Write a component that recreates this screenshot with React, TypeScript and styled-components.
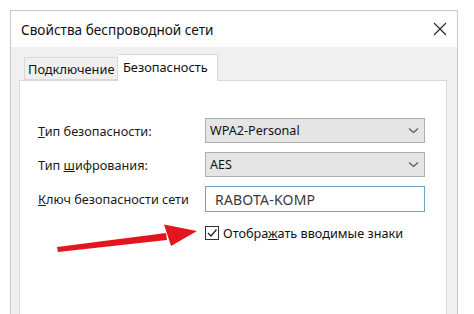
import React from "react";
import styled, { createGlobalStyle } from "styled-components";

const Global = createGlobalStyle`
  html, body { margin: 0; padding: 0; background: #ffffff; }
  body { width: 474px; height: 314px; overflow: hidden; position: relative; font-family: "Noto Sans", "Open Sans", sans-serif; }
`;

const Stage = styled.div`
  position: relative;
  width: 474px;
  height: 314px;
  overflow: hidden;
  background: #ffffff;
  padding: 10px 0 0 10px;
  box-sizing: border-box;
`;

const Window = styled.div`
  width: 448px;
  height: 330px;
  border: 1px solid #dcc4b4;
  box-sizing: border-box;
  display: flex;
  flex-direction: column;
  background: #f0f0f0;
`;

const TitleBar = styled.div`
  height: 36px;
  flex: none;
  background: #ffffff;
  display: flex;
  align-items: center;
  justify-content: space-between;
  padding: 0 10px 0 10px;
  font-size: 13.6px;
  color: #111;
`;

const Body = styled.div`
  flex: 1;
  display: flex;
  flex-direction: column;
  padding: 7px 10px 0 8px;
`;

const TabRow = styled.div`
  display: flex;
  align-items: flex-end;
  padding-left: 5px;
  height: 26px;
  flex: none;
  position: relative;
  z-index: 1;
`;

const Tab = styled.div<{ $active?: boolean }>`
  box-sizing: border-box;
  height: ${(p) => (p.$active ? "27px" : "23px")};
  width: ${(p) => (p.$active ? "100px" : "94px")};
  border: 1px solid #d9d9d9;
  border-bottom: ${(p) => (p.$active ? "none" : "1px solid #d9d9d9")};
  border-left: ${(p) => (p.$active ? "none" : "1px solid #d9d9d9")};
  background: ${(p) => (p.$active ? "#ffffff" : "#f0f0f0")};
  margin-bottom: ${(p) => (p.$active ? "-1px" : "0")};
  font-size: 12.8px;
  color: #111;
  white-space: nowrap;
  display: flex;
  align-items: ${(p) => (p.$active ? "flex-start" : "center")};
  padding-top: ${(p) => (p.$active ? "3px" : "0")};
  padding-left: ${(p) => (p.$active ? "5px" : "3px")};
`;

const Panel = styled.div`
  flex: 1;
  background: #ffffff;
  border: 1px solid #d9d9d9;
  padding: 37px 20px 0 18px;
  display: flex;
  flex-direction: column;
`;

const Form = styled.div`
  display: grid;
  grid-template-columns: 167px 220px;
  row-gap: 9px;
  align-items: center;
`;

const Label = styled.div`
  font-size: 12.7px;
  color: #1a1a1a;
  white-space: nowrap;
`;

const Select = styled.div`
  height: 25px;
  box-sizing: border-box;
  border: 1px solid #adadad;
  background: #e5e5e5;
  display: flex;
  align-items: center;
  justify-content: space-between;
  padding: 0 5px 0 4px;
  font-size: 12.6px;
  color: #111;
`;

const TextBox = styled.div`
  height: 26px;
  box-sizing: border-box;
  border: 1px solid #6ea3c1;
  background: #ffffff;
  display: flex;
  align-items: center;
  padding: 0 9px;
  font-size: 14px;
  letter-spacing: 0.2px;
  color: #3a3a3a;
`;

const CheckRow = styled.label`
  display: flex;
  align-items: center;
  gap: 4px;
  margin: 12px 0 0 167px;
  font-size: 12.7px;
  color: #111;
`;

const Box = styled.span`
  width: 14px;
  height: 14px;
  box-sizing: border-box;
  border: 1px solid #333;
  background: #fff;
  display: flex;
  align-items: center;
  justify-content: center;
`;

const Arrow = styled.svg`
  position: absolute;
  left: 0;
  top: 0;
  pointer-events: none;
`;

const Chevron = () => (
  <svg width="11" height="7" viewBox="0 0 11 7">
    <path d="M1 1.5 L5.5 5.5 L10 1.5" fill="none" stroke="#5a5a5a" strokeWidth="1.2" />
  </svg>
);

export default function App() {
  return (
    <>
      <Global />
      <Stage>
        <Window>
          <TitleBar>
            <span>Свойства беспроводной сети</span>
            <svg width="14" height="14" viewBox="0 0 14 14">
              <path d="M1 1 L13 13 M13 1 L1 13" stroke="#222" strokeWidth="1.1" />
            </svg>
          </TitleBar>
          <Body>
            <TabRow>
              <Tab>Подключение</Tab>
              <Tab $active>Безопасность</Tab>
            </TabRow>
            <Panel>
              <Form>
                <Label>
                  <u>Т</u>ип безопасности:
                </Label>
                <Select>
                  <span>WPA2-Personal</span>
                  <Chevron />
                </Select>
                <Label>
                  Тип <u>ш</u>ифрования:
                </Label>
                <Select>
                  <span>AES</span>
                  <Chevron />
                </Select>
                <Label>
                  <u>К</u>люч безопасности сети
                </Label>
                <TextBox>RABOTA-KOMP</TextBox>
              </Form>
              <CheckRow>
                <Box>
                  <svg width="12" height="12" viewBox="0 0 12 12">
                    <path d="M2 6 L5 9 L10.5 2.5" fill="none" stroke="#222" strokeWidth="1.3" />
                  </svg>
                </Box>
                <span>
                  Отобра<u>ж</u>ать вводимые знаки
                </span>
              </CheckRow>
            </Panel>
          </Body>
        </Window>
        <Arrow width="474" height="314" viewBox="0 0 474 314">
          <path d="M57 247 L166 233 L167 240 L58 252 Z" fill="#e3161f" />
          <path d="M164 224.5 L197 231 L171 246 Z" fill="#e3161f" />
        </Arrow>
      </Stage>
    </>
  );
}
